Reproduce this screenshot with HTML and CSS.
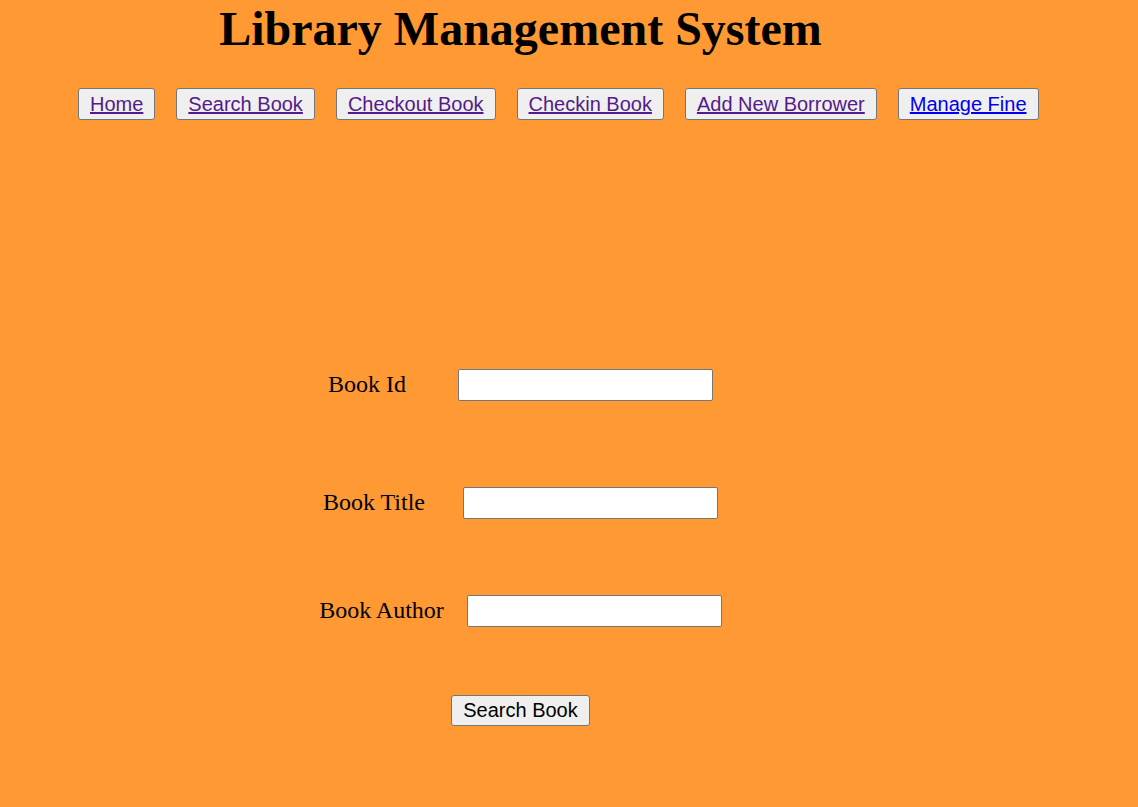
FILE: index.html
```html
<!DOCTYPE html>
<html>
<head>
<meta charset="utf-8">
<title>Library Management System</title>
<link rel="stylesheet" href="styles.css">
</head>
<body>
<div class="page">
  <h1 class="title">Library Management System</h1>
  <nav class="nav">
    <button class="nav-btn"><a class="visited" href="#">Home</a></button>
    <button class="nav-btn"><a class="visited" href="#">Search Book</a></button>
    <button class="nav-btn"><a class="visited" href="#">Checkout Book</a></button>
    <button class="nav-btn"><a class="visited" href="#">Checkin Book</a></button>
    <button class="nav-btn"><a class="visited" href="#">Add New Borrower</a></button>
    <button class="nav-btn"><a class="fresh" href="#">Manage Fine</a></button>
  </nav>
  <form class="form">
    <div class="row row-id">
      <label class="label">Book Id</label>
      <input class="field" type="text">
    </div>
    <div class="row row-title">
      <label class="label">Book Title</label>
      <input class="field" type="text">
    </div>
    <div class="row row-author">
      <label class="label">Book Author</label>
      <input class="field" type="text">
    </div>
    <div class="row row-submit">
      <button class="submit" type="button">Search Book</button>
    </div>
  </form>
</div>
</body>
</html>
```
FILE: styles.css
```css
html, body {
  margin: 0;
  padding: 0;
  background: #ff9933;
  height: 100%;
}
body {
  font-family: "Liberation Serif", "Times New Roman", serif;
  color: #000;
}
.page {
  width: 1041px;
  display: flex;
  flex-direction: column;
}
.title {
  margin: 2px 0 0;
  font-family: "Liberation Serif", serif;
  font-size: 48px;
  font-weight: bold;
  text-align: center;
  line-height: 53px;
}
.nav {
  display: flex;
  gap: 21px;
  padding-left: 78px;
  margin-top: 33px;
}
.nav-btn, .submit {
  height: 32px;
  padding: 0 11px;
  border: 1px solid #767676;
  border-radius: 3px;
  background: #efefef;
  font-family: "Liberation Sans", Arial, sans-serif;
  font-size: 20px;
  box-sizing: border-box;
}
.nav-btn a {
  font-family: "Liberation Sans", Arial, sans-serif;
  font-size: 20px;
  text-decoration: underline;
}
.visited { color: #551a8b; }
.fresh { color: #0000ee; }
.form {
  display: flex;
  flex-direction: column;
  align-items: center;
  margin: 0;
}
.row {
  display: flex;
  align-items: center;
  height: 32px;
}
.row-id { margin-top: 249px; gap: 52px; }
.row-title { margin-top: 86px; gap: 38px; }
.row-author { margin-top: 76px; gap: 23px; }
.row-submit { margin-top: 68px; height: 31px; }
.label {
  font-size: 24px;
  line-height: 28px;
  padding-bottom: 3px;
}
.field {
  width: 255px;
  height: 32px;
  box-sizing: border-box;
  border: 1px solid #767676;
  border-radius: 2px;
  background: #fff;
  margin: 0;
}
.submit {
  height: 31px;
  color: #000;
  padding: 0 11px;
}
```
